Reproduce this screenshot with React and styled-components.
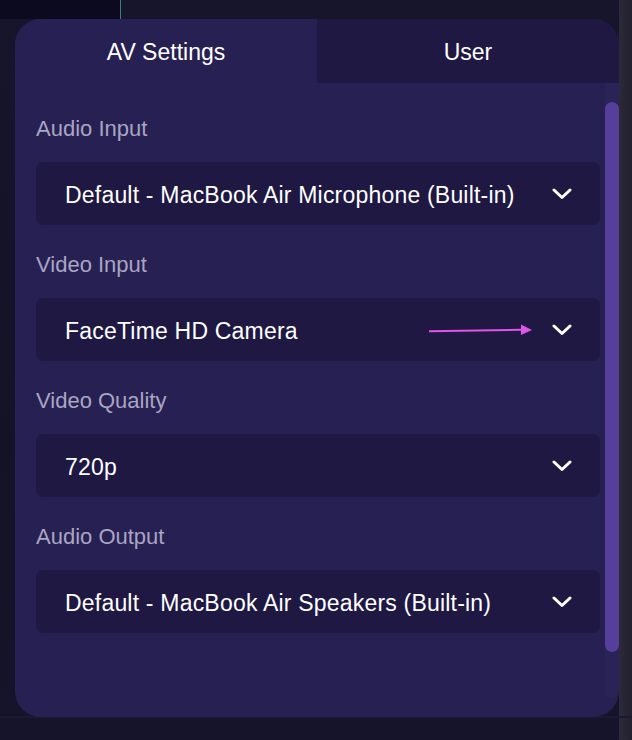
import React from 'react';
import styled, { createGlobalStyle } from 'styled-components';

const GlobalStyle = createGlobalStyle`
  * { box-sizing: border-box; }
  body {
    margin: 0;
    background: #14132a;
    font-family: "Liberation Sans", Arial, Helvetica, sans-serif;
  }
`;

const devices = [
  { label: 'Audio Input', value: 'Default - MacBook Air Microphone (Built-in)' },
  { label: 'Video Input', value: 'FaceTime HD Camera', marked: true },
  { label: 'Video Quality', value: '720p' },
  { label: 'Audio Output', value: 'Default - MacBook Air Speakers (Built-in)' },
];

function Chevron() {
  return (
    <svg width='20' height='12' viewBox='0 0 20 12' fill='none'>
      <path d='M2 2l8 7.5L18 2' stroke='#ffffff' strokeWidth='3' strokeLinecap='round' strokeLinejoin='round' />
    </svg>
  );
}

function PointerArrow() {
  return (
    <Pointer width='104' height='14' viewBox='0 0 104 14'>
      <path d='M0 8.2 L92 6.8' stroke='#e154e8' strokeWidth='2' />
      <path d='M92 1.5 L103 7 L92 12 Z' fill='#e154e8' />
    </Pointer>
  );
}

function App() {
  return (
    <Page>
      <GlobalStyle />
      <Panel>
        <Tabs>
          <Tab active>AV Settings</Tab>
          <Tab>User</Tab>
        </Tabs>

        <Body>
          <Content>
            {devices.map((d) => (
              <Field key={d.label}>
                <Label>{d.label}</Label>
                <Select>
                  <Value>{d.value}</Value>
                  {d.marked && <PointerArrow />}
                  <Chevron />
                </Select>
              </Field>
            ))}
          </Content>

          <ScrollTrack>
            <ScrollThumb />
          </ScrollTrack>
        </Body>
      </Panel>
    </Page>
  );
}

const Page = styled.div`
  width: 632px;
  height: 740px;
  padding: 19px 13px 23px 15px;
  background:
    linear-gradient(90deg, #0b0a1f 0, #0b0a1f 120px, #3d7f80 120px, #3d7f80 121px, transparent 121px) top / 100% 19px no-repeat,
    linear-gradient(180deg, transparent 0, transparent 716px, #1c1a33 716px, #1c1a33 718px, transparent 718px),
    linear-gradient(90deg, transparent 0, transparent 619px, #2c2a38 619px, #22202e 632px),
    linear-gradient(180deg, #16152c 0, #131227 60%, #15142a 100%);
`;

const Panel = styled.div`
  width: 604px;
  height: 698px;
  border-radius: 26px;
  overflow: hidden;
  background: #272053;
  display: flex;
  flex-direction: column;
`;

const Tabs = styled.div`
  display: flex;
  height: 64px;
  flex-shrink: 0;
`;

const Tab = styled.div`
  flex: 1;
  display: flex;
  align-items: center;
  justify-content: center;
  background: ${({ active }) => (active ? '#272053' : '#1e1843')};
  color: #ffffff;
  font-size: 23px;
  padding-top: 2px;
`;

const Body = styled.div`
  flex: 1;
  display: flex;
  min-height: 0;
`;

const Content = styled.div`
  flex: 1;
  padding: 34px 5px 0 21px;
  display: flex;
  flex-direction: column;
  gap: 28px;
`;

const Field = styled.div`
  display: flex;
  flex-direction: column;
  gap: 21px;
`;

const Label = styled.div`
  color: #a9a5c2;
  font-size: 22px;
  line-height: 24px;
`;

const Select = styled.div`
  position: relative;
  height: 63px;
  border-radius: 7px;
  background: #1e1843;
  color: #ffffff;
  display: flex;
  align-items: center;
  justify-content: space-between;
  padding: 0 28px 0 29px;
`;

const Value = styled.span`
  font-size: 23px;
  letter-spacing: 0.2px;
  padding-top: 3px;
`;

const Pointer = styled.svg`
  position: absolute;
  left: 393px;
  top: 25px;
`;

const ScrollTrack = styled.div`
  width: 14px;
  margin-bottom: 19px;
  border-radius: 0 0 10px 10px;
  background: #2a2357;
  padding-top: 19px;
  display: flex;
  flex-direction: column;
`;

const ScrollThumb = styled.div`
  height: 550px;
  border-radius: 7px;
  background: #553f9b;
`;

export default App;
